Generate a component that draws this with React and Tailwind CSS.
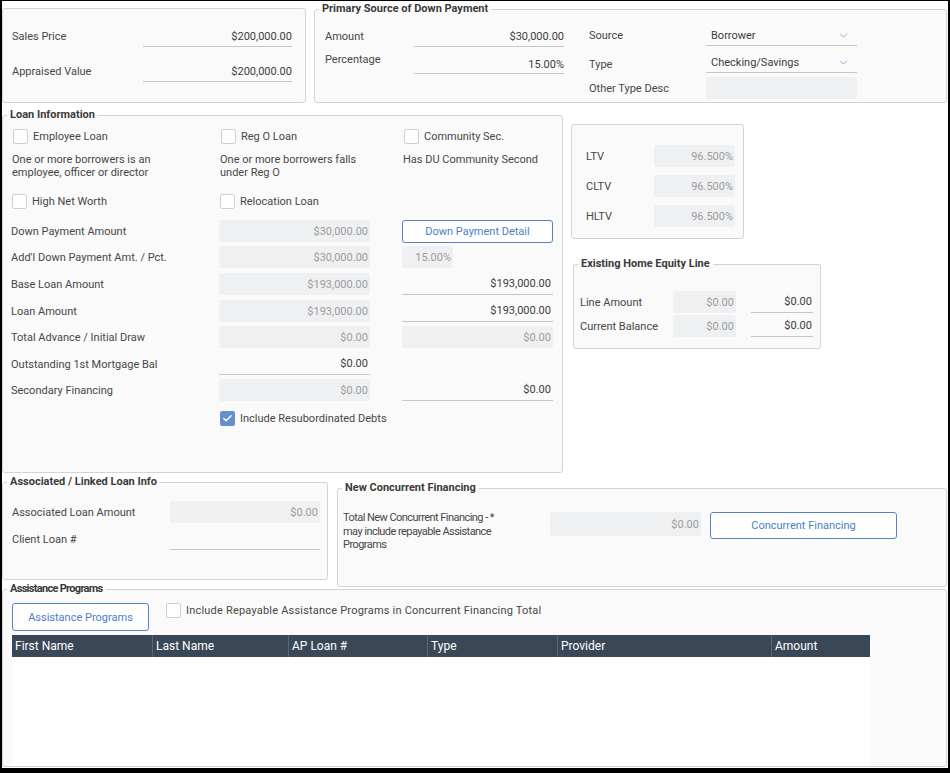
import { ChevronDown, Check } from 'lucide-react'

const grayBox = 'flex h-[22px] items-center justify-end rounded-[3px] bg-[#eef0f2] pr-[2px] text-[#9c9c9c]'
const lineBox = 'flex h-[21px] items-center justify-end border-b border-[#c6c6c6] text-[#3c3c3c]'

function Fieldset ({ title, className = '', legendClass = '', children }) {
  return (
    <fieldset className={`rounded-[3px] border border-[#d4d4d4] bg-[#fafafa] ${className}`}>
      <legend className={`ml-[4px] px-[3px] text-[11px] font-bold leading-[14px] text-[#3a3a3a] ${legendClass}`}>{title}</legend>
      {children}
    </fieldset>
  )
}

function Box ({ checked }) {
  if (checked) {
    return (
      <span className="flex h-[15px] w-[15px] shrink-0 items-center justify-center rounded-[2px] bg-[#6690cb]">
        <Check className="h-[11px] w-[11px] text-white" strokeWidth={3} />
      </span>
    )
  }
  return <span className="h-[15px] w-[15px] shrink-0 rounded-[2px] border border-[#d0d0d0] bg-white" />
}

function Select ({ value }) {
  return (
    <div className="flex h-[21px] w-[151px] items-center justify-between border-b border-[#c6c6c6] pl-[5px] pr-[7px] text-[#3c3c3c]">
      {value}
      <ChevronDown className="h-[13px] w-[13px] text-[#6d95cf]" strokeWidth={1.5} />
    </div>
  )
}

function LoanRow ({ label, className = '', children }) {
  return (
    <div className={`flex h-[22px] items-center pl-[8px] ${className}`}>
      <span className="w-[208px]">{label}</span>
      {children}
    </div>
  )
}

export default function App () {
  return (
    <div className="h-[773px] w-[950px] overflow-hidden border-b-[5px] border-l-2 border-r-2 border-t border-black bg-white font-['Roboto','Liberation_Sans',sans-serif] text-[11px] leading-[13px] text-[#474747]">
      {/* top row */}
      <div className="flex items-start">
        <div className="mt-[7px] h-[95px] w-[304px] rounded-[3px] border border-[#d4d4d4] bg-[#fafafa] pl-[9px] pt-[17px]">
          <div className="flex items-center">
            <span className="w-[131px]">Sales Price</span>
            <div className={`${lineBox} w-[149px]`}>$200,000.00</div>
          </div>
          <div className="mt-[14px] flex items-center">
            <span className="w-[131px]">Appraised Value</span>
            <div className={`${lineBox} w-[149px]`}>$200,000.00</div>
          </div>
        </div>

        <Fieldset title="Primary Source of Down Payment" className="ml-[8px] mt-px h-[101px] w-[633px]">
          <div className="flex">
            <div className="pl-[10px] pt-[10px]">
              <div className="flex items-center">
                <span className="w-[89px]">Amount</span>
                <div className={`${lineBox} w-[150px]`}>$30,000.00</div>
              </div>
              <div className="mt-[6px] flex items-start">
                <span className="w-[89px]">Percentage</span>
                <div className={`${lineBox} w-[150px] pt-[2px]`}>15.00%</div>
              </div>
            </div>
            <div className="ml-[25px] pt-[9px]">
              <div className="flex items-center">
                <span className="w-[117px]">Source</span>
                <Select value="Borrower" />
              </div>
              <div className="mt-[6px] flex items-center">
                <span className="w-[117px] pt-[3px]">Type</span>
                <Select value="Checking/Savings" />
              </div>
              <div className="mt-[4px] flex items-center">
                <span className="w-[117px]">Other Type Desc</span>
                <div className="h-[22px] w-[151px] rounded-[3px] bg-[#eef0f2]" />
              </div>
            </div>
          </div>
        </Fieldset>
      </div>

      {/* middle row */}
      <div className="mt-[5px] flex items-start">
        <Fieldset title="Loan Information" className="h-[365px] w-[561px]">
          <div className="mt-[7px] grid grid-cols-[208px_183px_1fr] pl-[9px]">
            <label className="flex items-center gap-[5px] pl-px"><Box />Employee Loan</label>
            <label className="flex items-center gap-[5px] pl-px"><Box />Reg O Loan</label>
            <label className="flex items-center gap-[5px] pl-px"><Box />Community Sec.</label>
          </div>
          <div className="mt-[9px] grid grid-cols-[208px_183px_1fr] pl-[9px]">
            <p>One or more borrowers is an<br />employee, officer or director</p>
            <p>One or more borrowers falls<br />under Reg O</p>
            <p>Has DU Community Second</p>
          </div>
          <div className="mt-[15px] grid grid-cols-[208px_183px_1fr] pl-[9px]">
            <label className="flex items-center gap-[5px]"><Box />High Net Worth</label>
            <label className="flex items-center gap-[5px]"><Box />Relocation Loan</label>
          </div>

          <LoanRow label="Down Payment Amount" className="mt-[11px]">
            <div className={`${grayBox} w-[151px]`}>$30,000.00</div>
            <button className="ml-[32px] h-[23px] w-[151px] rounded-[3px] border border-[#5183c6] bg-white text-[#4a7fc4]">Down Payment Detail</button>
          </LoanRow>
          <LoanRow label="Add'l Down Payment Amt. / Pct." className="mt-[4px]">
            <div className={`${grayBox} w-[151px]`}>$30,000.00</div>
            <div className={`${grayBox} ml-[32px] w-[51px]`}>15.00%</div>
          </LoanRow>
          <LoanRow label="Base Loan Amount" className="mt-[5px]">
            <div className={`${grayBox} w-[151px]`}>$193,000.00</div>
            <div className={`${lineBox} ml-[32px] h-[22px] w-[151px] pr-[2px]`}>$193,000.00</div>
          </LoanRow>
          <LoanRow label="Loan Amount" className="mt-[5px]">
            <div className={`${grayBox} w-[151px]`}>$193,000.00</div>
            <div className={`${lineBox} ml-[32px] h-[22px] w-[151px] pr-[2px]`}>$193,000.00</div>
          </LoanRow>
          <LoanRow label="Total Advance / Initial Draw" className="mt-[4px]">
            <div className={`${grayBox} w-[151px]`}>$0.00</div>
            <div className={`${grayBox} ml-[32px] w-[151px]`}>$0.00</div>
          </LoanRow>
          <LoanRow label="Outstanding 1st Mortgage Bal" className="mt-[5px]">
            <div className={`${lineBox} h-[22px] w-[151px] pr-[2px]`}>$0.00</div>
          </LoanRow>
          <LoanRow label="Secondary Financing" className="mt-[4px]">
            <div className={`${grayBox} w-[151px]`}>$0.00</div>
            <div className={`${lineBox} ml-[32px] h-[22px] w-[151px] pr-[2px]`}>$0.00</div>
          </LoanRow>
          <label className="mt-[10px] flex items-center gap-[5px] pl-[217px]">
            <Box checked />Include Resubordinated Debts
          </label>
        </Fieldset>

        <div className="ml-[8px]">
          <div className="mt-[16px] h-[115px] w-[173px] rounded-[3px] border border-[#d4d4d4] bg-[#fafafa] pl-[14px] pt-[20px]">
            {['LTV', 'CLTV', 'HLTV'].map((l, i) => (
              <div key={l} className={`flex h-[22px] items-center ${i ? 'mt-[8px]' : ''}`}>
                <span className="w-[68px]">{l}</span>
                <div className={`${grayBox} w-[81px]`}>96.500%</div>
              </div>
            ))}
          </div>
          <Fieldset title="Existing Home Equity Line" className="ml-[2px] mt-[18px] h-[92px] w-[248px]">
            <div className="pl-[6px] pt-[20px]">
              <div className="flex h-[22px] items-center">
                <span className="w-[93px]">Line Amount</span>
                <div className={`${grayBox} w-[63px]`}>$0.00</div>
                <div className={`${lineBox} ml-[15px] h-[22px] w-[62px] pr-[1px]`}>$0.00</div>
              </div>
              <div className="mt-[2px] flex h-[22px] items-center">
                <span className="w-[93px]">Current Balance</span>
                <div className={`${grayBox} w-[63px]`}>$0.00</div>
                <div className={`${lineBox} ml-[15px] h-[22px] w-[62px] pr-[1px]`}>$0.00</div>
              </div>
            </div>
          </Fieldset>
        </div>
      </div>

      {/* third row */}
      <div className="flex items-start">
        <Fieldset title="Associated / Linked Loan Info" className="mt-[2px] h-[105px] w-[326px]">
          <div className="pl-[9px] pt-[12px]">
            <div className="flex h-[22px] items-center">
              <span className="w-[158px]">Associated Loan Amount</span>
              <div className={`${grayBox} w-[150px]`}>$0.00</div>
            </div>
            <div className="mt-[5px] flex h-[22px] items-center">
              <span className="w-[158px]">Client Loan #</span>
              <div className={`${lineBox} h-[22px] w-[150px]`} />
            </div>
          </div>
        </Fieldset>
        <Fieldset title="New Concurrent Financing" className="ml-[9px] mt-[8px] h-[106px] w-[610px]">
          <div className="flex items-start pl-[5px] pt-[17px]">
            <p className="-mt-px w-[207px] leading-[13.5px] tracking-[-0.55px]">
              Total New Concurrent Financing - *<br />may include repayable Assistance<br />Programs
            </p>
            <div className={`${grayBox} h-[24px] w-[151px]`}>$0.00</div>
            <button className="ml-[9px] h-[27px] w-[187px] rounded-[3px] border border-[#5183c6] bg-white text-[#4a7fc4]">Concurrent Financing</button>
          </div>
        </Fieldset>
      </div>

      {/* assistance programs */}
      <Fieldset title="Assistance Programs" legendClass="tracking-[-0.7px]" className="-mt-[5px] h-[185px] w-[945px]">
        <div className="flex items-start pl-[9px] pt-[7px]">
          <button className="h-[28px] w-[137px] rounded-[3px] border border-[#5183c6] bg-white text-[#4a7fc4]">Assistance Programs</button>
          <label className="ml-[17px] flex items-start gap-[5px]">
            <Box />
            <span className="pt-px tracking-[0.2px]">Include Repayable Assistance Programs in Concurrent Financing Total</span>
          </label>
        </div>
        <div className="ml-[9px] mt-[4px] w-[858px] bg-white">
          <div className="flex h-[22px] items-stretch bg-[#3a4757] text-[12px] text-white">
            {[['First Name', 140], ['Last Name', 136], ['AP Loan #', 139], ['Type', 130], ['Provider', 214], ['Amount', 99]].map(([h, w], i) => (
              <div key={h} style={{ width: w }} className={`flex items-center pl-[3px] ${i ? 'border-l border-[#5a6676]' : ''}`}>{h}</div>
            ))}
          </div>
          <div className="h-[109px]" />
        </div>
      </Fieldset>
    </div>
  )
}
